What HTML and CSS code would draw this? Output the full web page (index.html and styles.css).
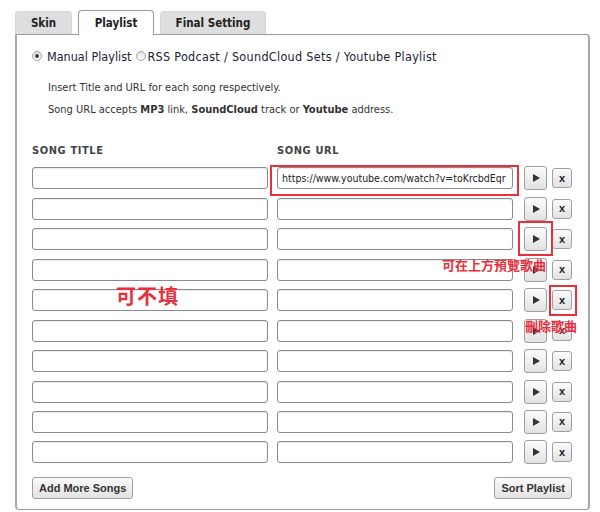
FILE: index.html
```html
<!DOCTYPE html>
<html>
<head>
<meta charset="utf-8">
<link rel="stylesheet" href="styles.css">
</head>
<body>
<div class="wrap">
  <div class="tabs">
    <div class="tab tab-skin">Skin</div>
    <div class="tab tab-playlist active">Playlist</div>
    <div class="tab tab-final">Final Setting</div>
  </div>
  <div class="panel">
    <div class="mode">
      <span class="radio checked"></span><span class="mode-label">Manual Playlist</span>
      <span class="radio second"></span><span class="mode-label wide">RSS Podcast / SoundCloud Sets / Youtube Playlist</span>
    </div>
    <div class="desc">
      <p>Insert Title and URL for each song respectively.</p>
      <p>Song URL accepts <b>MP3</b> link, <b>SoundCloud</b> track or <b>Youtube</b> address.</p>
    </div>
    <div class="songs">
      <div class="head">SONG TITLE</div>
      <div class="head">SONG URL</div>
      <div></div>
      <div></div>

      <div class="field"></div><div class="field url">https://www.youtube.com/watch?v=toKrcbdEqr</div><div class="btn play"><span class="tri"></span></div><div class="btn del">x</div>
      <div class="field"></div><div class="field url"></div><div class="btn play"><span class="tri"></span></div><div class="btn del">x</div>
      <div class="field"></div><div class="field url"></div><div class="btn play"><span class="tri"></span></div><div class="btn del">x</div>
      <div class="field"></div><div class="field url"></div><div class="btn play"><span class="tri"></span></div><div class="btn del">x</div>
      <div class="field"></div><div class="field url"></div><div class="btn play"><span class="tri"></span></div><div class="btn del">x</div>
      <div class="field"></div><div class="field url"></div><div class="btn play"><span class="tri"></span></div><div class="btn del">x</div>
      <div class="field"></div><div class="field url"></div><div class="btn play"><span class="tri"></span></div><div class="btn del">x</div>
      <div class="field"></div><div class="field url"></div><div class="btn play"><span class="tri"></span></div><div class="btn del">x</div>
      <div class="field"></div><div class="field url"></div><div class="btn play"><span class="tri"></span></div><div class="btn del">x</div>
      <div class="field"></div><div class="field url"></div><div class="btn play"><span class="tri"></span></div><div class="btn del">x</div>
    </div>
    <div class="actions">
      <div class="action">Add More Songs</div>
      <div class="action">Sort Playlist</div>
    </div>

    <div class="mark mark-url"></div>
    <div class="mark mark-play"></div>
    <div class="mark mark-del"></div>
    <div class="note note-play">可在上方預覽歌曲</div>
    <div class="note note-del">刪除歌曲</div>
    <div class="note note-title">可不填</div>
  </div>
</div>
</body>
</html>
```

FILE: styles.css
```css
* { box-sizing: border-box; }
body {
  margin: 0;
  background: #fff;
  font-family: "DejaVu Sans", "Liberation Sans", sans-serif;
  font-stretch: semi-condensed;
  color: #333;
}
.wrap {
  padding: 10px 0 0 15px;
  width: 590px;
}
.tabs {
  display: flex;
  align-items: flex-end;
  gap: 6px;
  height: 24px;
}
.tab {
  height: 23px;
  background: #dedede;
  border: 1px solid #d6d6d6;
  border-bottom: none;
  border-radius: 4px 4px 0 0;
  font-size: 11.5px;
  font-weight: bold;
  color: #222;
  text-align: center;
  line-height: 22px;
}
.tab-skin { width: 57px; }
.tab-playlist { width: 76px; }
.tab-final { width: 106px; }
.tab.active {
  height: 25px;
  background: #fff;
  border-color: #999;
  margin-bottom: -1px;
  position: relative;
  z-index: 1;
  line-height: 24px;
}
.panel {
  position: relative;
  width: 575px;
  height: 476px;
  border: 1px solid #9a9a9a;
  border-right: 2px solid #a8a8a8;
  border-left: 2px solid #a8a8a8;
  border-radius: 0 4px 4px 4px;
  padding: 12px 15px 0 15px;
}
.mode {
  display: flex;
  align-items: center;
  height: 18px;
  font-size: 12.5px;
  color: #223;
}
.mode-label.wide { letter-spacing: 0.3px; }
.radio {
  width: 10px;
  height: 10px;
  border: 1px solid #a5a5a5;
  border-radius: 50%;
  background: linear-gradient(#e2e2e2, #fff);
  display: inline-flex;
  align-items: center;
  justify-content: center;
  margin-right: 5px;
}
.radio.second {
  margin-left: 5px;
  margin-right: 1px;
}
.radio.checked::after {
  content: "";
  width: 4px;
  height: 4px;
  border-radius: 50%;
  background: #444;
}
.desc {
  margin-top: 12px;
  padding-left: 16px;
  font-size: 11px;
  color: #333;
}
.desc p {
  margin: 0;
  line-height: 22px;
}
.songs {
  margin-top: 23px;
  display: grid;
  grid-template-columns: 236px 236px 23px 20px;
  column-gap: 9px;
  row-gap: 6.44px;
  align-items: center;
}
.songs > :nth-child(4n+3) { margin-left: 2px; }
.songs > :nth-child(4n) { margin-left: -2px; }
.head {
  font-size: 11px;
  font-weight: bold;
  letter-spacing: 0.6px;
  color: #444;
  height: 14px;
  line-height: 14px;
  margin-bottom: 2px;
}
.field {
  height: 22px;
  border: 1px solid #8a8a8a;
  border-radius: 3px;
  background: #fff;
  box-shadow: inset 0 1px 1px rgba(0,0,0,0.08);
}
.field.url {
  font-size: 10.5px;
  line-height: 20px;
  padding-left: 4px;
  white-space: nowrap;
  overflow: hidden;
  color: #222;
}
.btn {
  border: 1px solid #a0a0a0;
  border-radius: 3px;
  background: linear-gradient(#fbfbfb, #e2e2e2);
  display: flex;
  align-items: center;
  justify-content: center;
  justify-self: start;
}
.btn.play { width: 23px; height: 24px; }
.btn.del {
  width: 20px;
  height: 20px;
  font-family: "Liberation Sans", sans-serif;
  font-weight: bold;
  font-size: 11px;
  color: #222;
  padding-bottom: 1px;
}
.tri {
  width: 0;
  height: 0;
  border-top: 4px solid transparent;
  border-bottom: 4px solid transparent;
  border-left: 7px solid #333;
  margin-left: 1px;
}
.actions {
  display: flex;
  justify-content: space-between;
  margin-top: 13px;
  width: 540px;
}
.action {
  height: 22px;
  padding: 0 6px;
  border: 1px solid #a0a0a0;
  border-radius: 3px;
  background: linear-gradient(#fbfbfb, #e2e2e2);
  font-family: "Liberation Sans", sans-serif;
  font-weight: bold;
  font-size: 11px;
  color: #333;
  line-height: 20px;
}
.mark {
  position: absolute;
  border: 2px solid #e8303c;
}
.mark-url { left: 253px; top: 130px; width: 249px; height: 31px; }
.mark-play { left: 501px; top: 186px; width: 35px; height: 35px; }
.mark-del { left: 532px; top: 250px; width: 28px; height: 31px; }
.note {
  position: absolute;
  color: #e8303c;
  font-family: "Noto Sans CJK TC", "Noto Sans CJK SC", sans-serif;
  font-weight: bold;
  white-space: nowrap;
}
.note-play { left: 425px; top: 222px; font-size: 13px; line-height: 16px; }
.note-del { left: 508px; top: 283px; font-size: 13px; line-height: 16px; }
.note-title { left: 99px; top: 250px; font-size: 20px; line-height: 22px; letter-spacing: 1px; }
```
